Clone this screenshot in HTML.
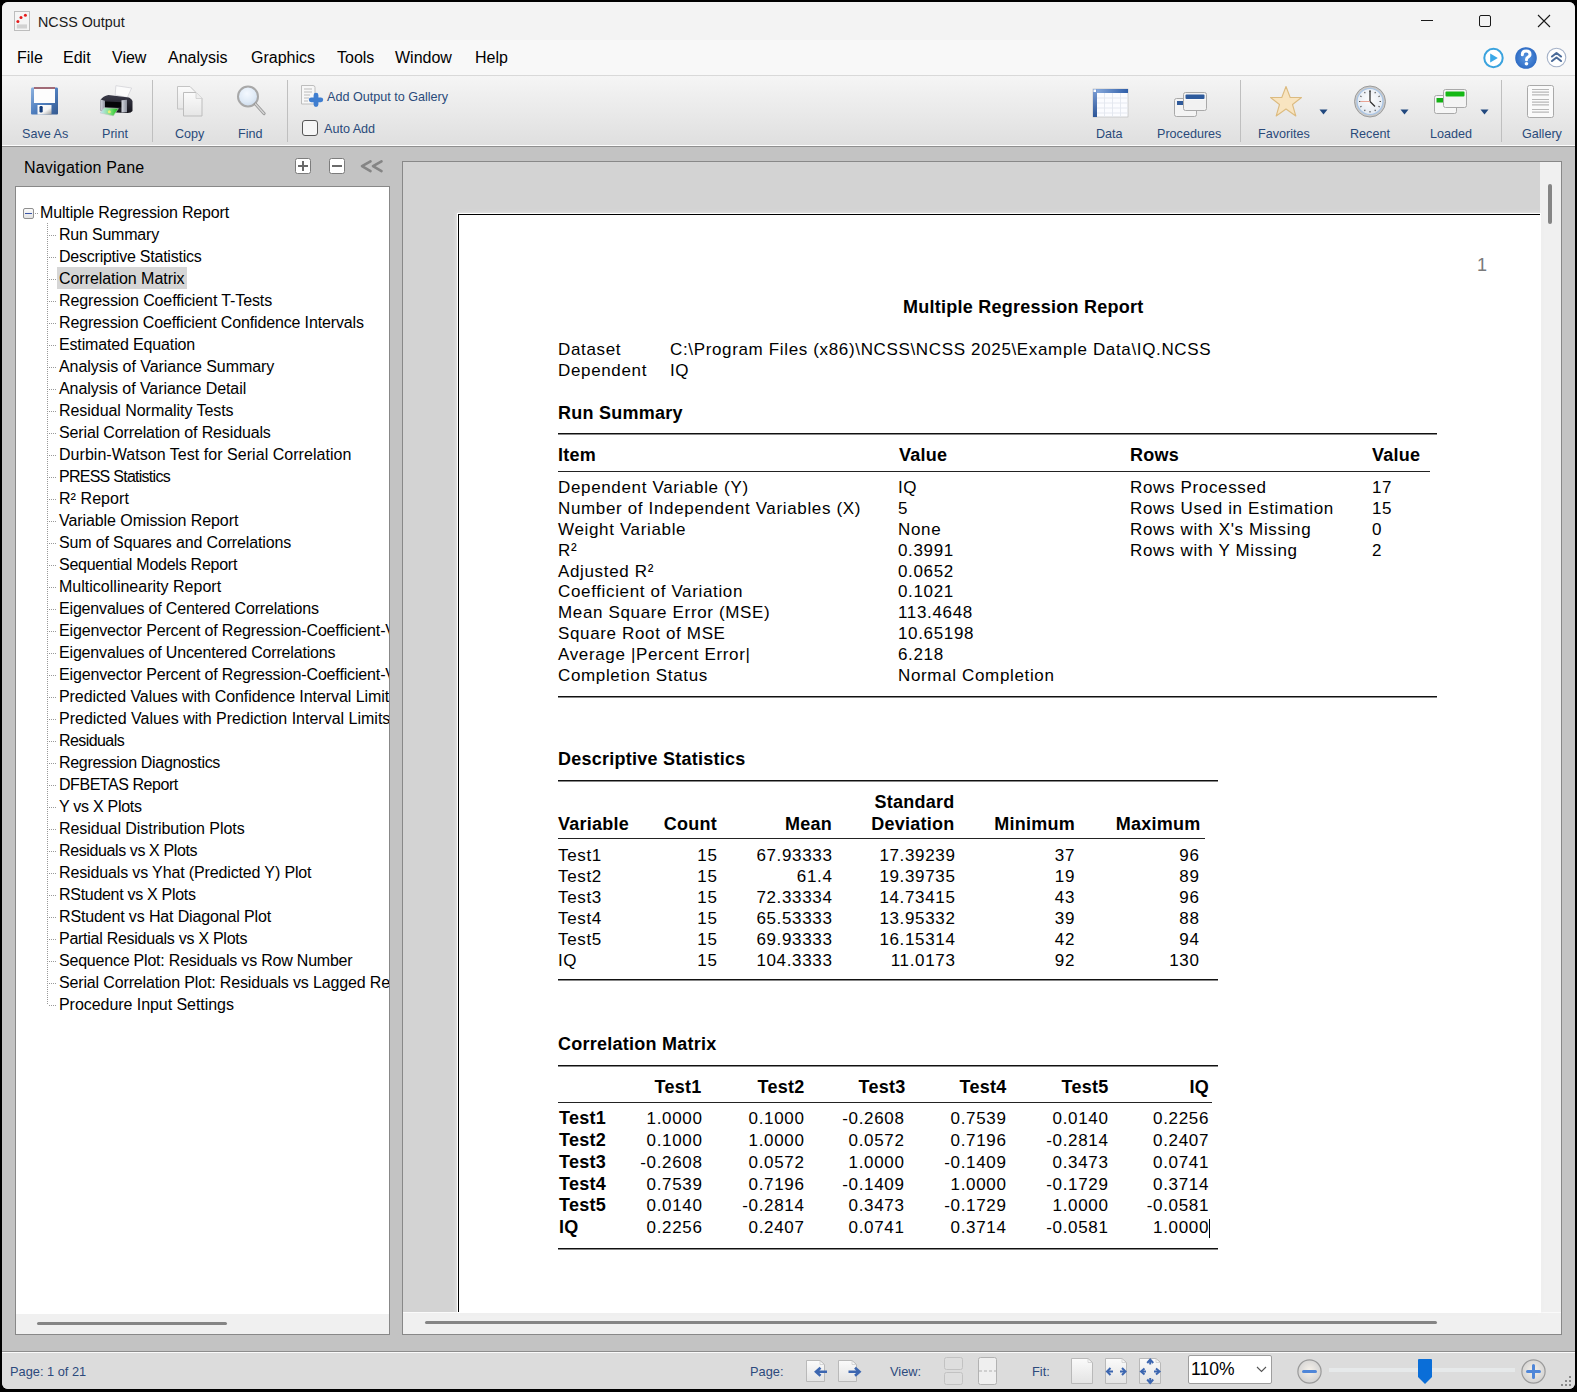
<!DOCTYPE html><html><head><meta charset="utf-8"><style>
*{margin:0;padding:0;box-sizing:border-box}
html,body{width:1577px;height:1392px;overflow:hidden;background:#000;font-family:"Liberation Sans",sans-serif;position:relative}
.a{position:absolute}
.t{position:absolute;white-space:pre;line-height:1}
.r17{font-size:17px;letter-spacing:0.65px;color:#000}
.b18{font-size:18px;font-weight:bold;letter-spacing:0.25px;color:#000}
.n16{font-size:16px;letter-spacing:-0.15px;color:#000}
.m16{font-size:16px;color:#000}
.tb{font-size:12.6px;color:#2a4a7a}
.rl{height:2px;background:linear-gradient(#000 0,#000 50%,#666 50%,#666 100%)}
</style></head><body>
<div class="a" style="left:2px;top:2px;width:1573px;height:1387px;background:#c3c3c3;border-radius:6px 6px 6px 6px;overflow:hidden"></div>
<div class="a" style="left:2px;top:2px;width:1573px;height:38px;background:#f3f3f3;border-radius:6px 6px 0 0"></div>
<div class="a" style="left:2px;top:40px;width:1573px;height:35px;background:#f8f8f8"></div>
<div class="a" style="left:2px;top:75px;width:1573px;height:1px;background:#d9d9d9"></div>
<div class="a" style="left:2px;top:76px;width:1573px;height:69px;background:linear-gradient(#f5f5f5,#dfdfdf)"></div>
<div class="a" style="left:2px;top:145px;width:1573px;height:1px;background:#fdfdfd"></div>
<div class="a" style="left:2px;top:146px;width:1573px;height:1px;background:#8f8f8f"></div>
<div class="a" style="left:2px;top:1351px;width:1573px;height:1px;background:#8d8d8d"></div>
<div class="a" style="left:2px;top:1352px;width:1573px;height:1px;background:#fbfbfb"></div>
<div class="a" style="left:2px;top:1353px;width:1573px;height:36px;background:#dcdcdc;border-radius:0 0 6px 6px"></div>
<div class="a" style="left:15px;top:186px;width:375px;height:1149px;background:#fff;border:1px solid #888"></div>
<div class="a" style="left:16px;top:1314px;width:373px;height:20px;background:#f0f0f0"></div>
<div class="a" style="left:37px;top:1322px;width:190px;height:3px;background:#858585;border-radius:2px"></div>
<div class="a" style="left:402px;top:161px;width:1160px;height:1174px;background:#d3d3d3;border:1px solid #888"></div>
<div class="a" style="left:1540px;top:162px;width:21px;height:1172px;background:#f0f0f0"></div>
<div class="a" style="left:403px;top:1312px;width:1158px;height:22px;background:#f0f0f0;border-top:1px solid #fafafa"></div>
<div class="a" style="left:1548px;top:184px;width:4px;height:40px;background:#858585;border-radius:2px"></div>
<div class="a" style="left:425px;top:1321px;width:1012px;height:3px;background:#858585;border-radius:2px"></div>
<div class="a" style="left:458px;top:214px;width:1082px;height:1098px;background:#fff;border-left:1px solid #000;border-top:1px solid #000;box-shadow:0 0 0 1px #fff,0 0 4px 1px #eee"></div>
<div class="t " style="left:1477px;top:256px;font-size:18px;color:#7a7a7a">1</div>
<div class="t b18" style="left:903px;top:298px;">Multiple Regression Report</div>
<div class="t r17" style="left:558px;top:341px;">Dataset</div>
<div class="t r17" style="left:670px;top:341px;">C:\Program Files (x86)\NCSS\NCSS 2025\Example Data\IQ.NCSS</div>
<div class="t r17" style="left:558px;top:362px;">Dependent</div>
<div class="t r17" style="left:670px;top:362px;">IQ</div>
<div class="t b18" style="left:558px;top:404px;">Run Summary</div>
<div class="a" style="left:558px;top:433px;width:879px;height:2px;background:linear-gradient(#111 0,#111 60%,#888 60%)"></div>
<div class="t b18" style="left:558px;top:446px;">Item</div>
<div class="t b18" style="left:899px;top:446px;">Value</div>
<div class="t b18" style="left:1130px;top:446px;">Rows</div>
<div class="t b18" style="left:1372px;top:446px;">Value</div>
<div class="a" style="left:558px;top:471px;width:872px;height:1px;background:#222"></div>
<div class="t r17" style="left:558px;top:479px;">Dependent Variable (Y)</div>
<div class="t r17" style="left:898px;top:479px;">IQ</div>
<div class="t r17" style="left:1130px;top:479px;">Rows Processed</div>
<div class="t r17" style="left:1372px;top:479px;">17</div>
<div class="t r17" style="left:558px;top:500px;">Number of Independent Variables (X)</div>
<div class="t r17" style="left:898px;top:500px;">5</div>
<div class="t r17" style="left:1130px;top:500px;">Rows Used in Estimation</div>
<div class="t r17" style="left:1372px;top:500px;">15</div>
<div class="t r17" style="left:558px;top:521px;">Weight Variable</div>
<div class="t r17" style="left:898px;top:521px;">None</div>
<div class="t r17" style="left:1130px;top:521px;">Rows with X&#x27;s Missing</div>
<div class="t r17" style="left:1372px;top:521px;">0</div>
<div class="t r17" style="left:558px;top:542px;">R²</div>
<div class="t r17" style="left:898px;top:542px;">0.3991</div>
<div class="t r17" style="left:1130px;top:542px;">Rows with Y Missing</div>
<div class="t r17" style="left:1372px;top:542px;">2</div>
<div class="t r17" style="left:558px;top:563px;">Adjusted R²</div>
<div class="t r17" style="left:898px;top:563px;">0.0652</div>
<div class="t r17" style="left:558px;top:583px;">Coefficient of Variation</div>
<div class="t r17" style="left:898px;top:583px;">0.1021</div>
<div class="t r17" style="left:558px;top:604px;">Mean Square Error (MSE)</div>
<div class="t r17" style="left:898px;top:604px;">113.4648</div>
<div class="t r17" style="left:558px;top:625px;">Square Root of MSE</div>
<div class="t r17" style="left:898px;top:625px;">10.65198</div>
<div class="t r17" style="left:558px;top:646px;">Average |Percent Error|</div>
<div class="t r17" style="left:898px;top:646px;">6.218</div>
<div class="t r17" style="left:558px;top:667px;">Completion Status</div>
<div class="t r17" style="left:898px;top:667px;">Normal Completion</div>
<div class="a" style="left:558px;top:696px;width:879px;height:2px;background:linear-gradient(#111 0,#111 60%,#888 60%)"></div>
<div class="t b18" style="left:558px;top:750px;">Descriptive Statistics</div>
<div class="a" style="left:558px;top:780px;width:660px;height:2px;background:linear-gradient(#111 0,#111 60%,#888 60%)"></div>
<div class="t b18" style="right:622.5px;top:793px;">Standard</div>
<div class="t b18" style="left:558px;top:815px;">Variable</div>
<div class="t b18" style="right:860px;top:815px;">Count</div>
<div class="t b18" style="right:745px;top:815px;">Mean</div>
<div class="t b18" style="right:622.5px;top:815px;">Deviation</div>
<div class="t b18" style="right:502px;top:815px;">Minimum</div>
<div class="t b18" style="right:376.5px;top:815px;">Maximum</div>
<div class="a" style="left:558px;top:838px;width:647px;height:1px;background:#222"></div>
<div class="t r17" style="left:558px;top:847px;">Test1</div>
<div class="t r17" style="right:859.5px;top:847px;">15</div>
<div class="t r17" style="right:744.5px;top:847px;">67.93333</div>
<div class="t r17" style="right:621.5px;top:847px;">17.39239</div>
<div class="t r17" style="right:502px;top:847px;">37</div>
<div class="t r17" style="right:377.5px;top:847px;">96</div>
<div class="t r17" style="left:558px;top:868px;">Test2</div>
<div class="t r17" style="right:859.5px;top:868px;">15</div>
<div class="t r17" style="right:744.5px;top:868px;">61.4</div>
<div class="t r17" style="right:621.5px;top:868px;">19.39735</div>
<div class="t r17" style="right:502px;top:868px;">19</div>
<div class="t r17" style="right:377.5px;top:868px;">89</div>
<div class="t r17" style="left:558px;top:889px;">Test3</div>
<div class="t r17" style="right:859.5px;top:889px;">15</div>
<div class="t r17" style="right:744.5px;top:889px;">72.33334</div>
<div class="t r17" style="right:621.5px;top:889px;">14.73415</div>
<div class="t r17" style="right:502px;top:889px;">43</div>
<div class="t r17" style="right:377.5px;top:889px;">96</div>
<div class="t r17" style="left:558px;top:910px;">Test4</div>
<div class="t r17" style="right:859.5px;top:910px;">15</div>
<div class="t r17" style="right:744.5px;top:910px;">65.53333</div>
<div class="t r17" style="right:621.5px;top:910px;">13.95332</div>
<div class="t r17" style="right:502px;top:910px;">39</div>
<div class="t r17" style="right:377.5px;top:910px;">88</div>
<div class="t r17" style="left:558px;top:931px;">Test5</div>
<div class="t r17" style="right:859.5px;top:931px;">15</div>
<div class="t r17" style="right:744.5px;top:931px;">69.93333</div>
<div class="t r17" style="right:621.5px;top:931px;">16.15314</div>
<div class="t r17" style="right:502px;top:931px;">42</div>
<div class="t r17" style="right:377.5px;top:931px;">94</div>
<div class="t r17" style="left:558px;top:952px;">IQ</div>
<div class="t r17" style="right:859.5px;top:952px;">15</div>
<div class="t r17" style="right:744.5px;top:952px;">104.3333</div>
<div class="t r17" style="right:621.5px;top:952px;">11.0173</div>
<div class="t r17" style="right:502px;top:952px;">92</div>
<div class="t r17" style="right:377.5px;top:952px;">130</div>
<div class="a" style="left:558px;top:979px;width:660px;height:2px;background:linear-gradient(#111 0,#111 60%,#888 60%)"></div>
<div class="t b18" style="left:558px;top:1035px;">Correlation Matrix</div>
<div class="a" style="left:558px;top:1065px;width:660px;height:2px;background:linear-gradient(#111 0,#111 60%,#888 60%)"></div>
<div class="t b18" style="right:875.5px;top:1078px;">Test1</div>
<div class="t b18" style="right:772.5px;top:1078px;">Test2</div>
<div class="t b18" style="right:671.5px;top:1078px;">Test3</div>
<div class="t b18" style="right:570.5px;top:1078px;">Test4</div>
<div class="t b18" style="right:468.5px;top:1078px;">Test5</div>
<div class="t b18" style="right:368px;top:1078px;">IQ</div>
<div class="a" style="left:558px;top:1102px;width:654px;height:1px;background:#222"></div>
<div class="t b18" style="left:559px;top:1109px;">Test1</div>
<div class="t r17" style="right:874.5px;top:1110px;">1.0000</div>
<div class="t r17" style="right:772.5px;top:1110px;">0.1000</div>
<div class="t r17" style="right:672.5px;top:1110px;">-0.2608</div>
<div class="t r17" style="right:570.5px;top:1110px;">0.7539</div>
<div class="t r17" style="right:468.5px;top:1110px;">0.0140</div>
<div class="t r17" style="right:368px;top:1110px;">0.2256</div>
<div class="t b18" style="left:559px;top:1131px;">Test2</div>
<div class="t r17" style="right:874.5px;top:1132px;">0.1000</div>
<div class="t r17" style="right:772.5px;top:1132px;">1.0000</div>
<div class="t r17" style="right:672.5px;top:1132px;">0.0572</div>
<div class="t r17" style="right:570.5px;top:1132px;">0.7196</div>
<div class="t r17" style="right:468.5px;top:1132px;">-0.2814</div>
<div class="t r17" style="right:368px;top:1132px;">0.2407</div>
<div class="t b18" style="left:559px;top:1153px;">Test3</div>
<div class="t r17" style="right:874.5px;top:1154px;">-0.2608</div>
<div class="t r17" style="right:772.5px;top:1154px;">0.0572</div>
<div class="t r17" style="right:672.5px;top:1154px;">1.0000</div>
<div class="t r17" style="right:570.5px;top:1154px;">-0.1409</div>
<div class="t r17" style="right:468.5px;top:1154px;">0.3473</div>
<div class="t r17" style="right:368px;top:1154px;">0.0741</div>
<div class="t b18" style="left:559px;top:1175px;">Test4</div>
<div class="t r17" style="right:874.5px;top:1176px;">0.7539</div>
<div class="t r17" style="right:772.5px;top:1176px;">0.7196</div>
<div class="t r17" style="right:672.5px;top:1176px;">-0.1409</div>
<div class="t r17" style="right:570.5px;top:1176px;">1.0000</div>
<div class="t r17" style="right:468.5px;top:1176px;">-0.1729</div>
<div class="t r17" style="right:368px;top:1176px;">0.3714</div>
<div class="t b18" style="left:559px;top:1196px;">Test5</div>
<div class="t r17" style="right:874.5px;top:1197px;">0.0140</div>
<div class="t r17" style="right:772.5px;top:1197px;">-0.2814</div>
<div class="t r17" style="right:672.5px;top:1197px;">0.3473</div>
<div class="t r17" style="right:570.5px;top:1197px;">-0.1729</div>
<div class="t r17" style="right:468.5px;top:1197px;">1.0000</div>
<div class="t r17" style="right:368px;top:1197px;">-0.0581</div>
<div class="t b18" style="left:559px;top:1218px;">IQ</div>
<div class="t r17" style="right:874.5px;top:1219px;">0.2256</div>
<div class="t r17" style="right:772.5px;top:1219px;">0.2407</div>
<div class="t r17" style="right:672.5px;top:1219px;">0.0741</div>
<div class="t r17" style="right:570.5px;top:1219px;">0.3714</div>
<div class="t r17" style="right:468.5px;top:1219px;">-0.0581</div>
<div class="t r17" style="right:368px;top:1219px;">1.0000</div>
<div class="a" style="left:1209px;top:1219px;width:1px;height:19px;background:#000"></div>
<div class="a" style="left:558px;top:1248px;width:660px;height:2px;background:linear-gradient(#111 0,#111 60%,#888 60%)"></div>
<div class="a" style="left:16px;top:187px;width:373px;height:1126px;overflow:hidden">
<div class="a" style="left:41px;top:80px;width:130px;height:22px;background:#d6d6d6"></div>
<div class="a" style="left:7px;top:21px;width:11px;height:11px;border:1px solid #8f8f8f;border-radius:2px;background:linear-gradient(#fafafa,#e4e4e4)"></div>
<div class="a" style="left:9px;top:26px;width:7px;height:1px;background:#3a55a8"></div>
<div class="a" style="left:19px;top:26px;width:4px;height:1px;background:repeating-linear-gradient(90deg,#999 0,#999 1px,transparent 1px,transparent 2px)"></div>
<div class="t n16" style="left:24px;top:18px;">Multiple Regression Report</div>
<div class="a" style="left:31px;top:36px;width:1px;height:781px;background:repeating-linear-gradient(#999 0,#999 1px,transparent 1px,transparent 2px)"></div>
<div class="a" style="left:32px;top:48px;width:8px;height:1px;background:repeating-linear-gradient(90deg,transparent 0,transparent 1px,#999 1px,#999 2px)"></div>
<div class="t n16" style="left:43px;top:40px;letter-spacing:-0.210px">Run Summary</div>
<div class="a" style="left:32px;top:70px;width:8px;height:1px;background:repeating-linear-gradient(90deg,transparent 0,transparent 1px,#999 1px,#999 2px)"></div>
<div class="t n16" style="left:43px;top:62px;letter-spacing:-0.231px">Descriptive Statistics</div>
<div class="a" style="left:32px;top:92px;width:8px;height:1px;background:repeating-linear-gradient(90deg,transparent 0,transparent 1px,#999 1px,#999 2px)"></div>
<div class="t n16" style="left:43px;top:84px;letter-spacing:-0.050px">Correlation Matrix</div>
<div class="a" style="left:32px;top:114px;width:8px;height:1px;background:repeating-linear-gradient(90deg,transparent 0,transparent 1px,#999 1px,#999 2px)"></div>
<div class="t n16" style="left:43px;top:106px;letter-spacing:-0.112px">Regression Coefficient T-Tests</div>
<div class="a" style="left:32px;top:136px;width:8px;height:1px;background:repeating-linear-gradient(90deg,transparent 0,transparent 1px,#999 1px,#999 2px)"></div>
<div class="t n16" style="left:43px;top:128px;letter-spacing:-0.145px">Regression Coefficient Confidence Intervals</div>
<div class="a" style="left:32px;top:158px;width:8px;height:1px;background:repeating-linear-gradient(90deg,transparent 0,transparent 1px,#999 1px,#999 2px)"></div>
<div class="t n16" style="left:43px;top:150px;letter-spacing:-0.150px">Estimated Equation</div>
<div class="a" style="left:32px;top:180px;width:8px;height:1px;background:repeating-linear-gradient(90deg,transparent 0,transparent 1px,#999 1px,#999 2px)"></div>
<div class="t n16" style="left:43px;top:172px;letter-spacing:-0.050px">Analysis of Variance Summary</div>
<div class="a" style="left:32px;top:202px;width:8px;height:1px;background:repeating-linear-gradient(90deg,transparent 0,transparent 1px,#999 1px,#999 2px)"></div>
<div class="t n16" style="left:43px;top:194px;letter-spacing:-0.073px">Analysis of Variance Detail</div>
<div class="a" style="left:32px;top:224px;width:8px;height:1px;background:repeating-linear-gradient(90deg,transparent 0,transparent 1px,#999 1px,#999 2px)"></div>
<div class="t n16" style="left:43px;top:216px;letter-spacing:-0.050px">Residual Normality Tests</div>
<div class="a" style="left:32px;top:246px;width:8px;height:1px;background:repeating-linear-gradient(90deg,transparent 0,transparent 1px,#999 1px,#999 2px)"></div>
<div class="t n16" style="left:43px;top:238px;letter-spacing:-0.143px">Serial Correlation of Residuals</div>
<div class="a" style="left:32px;top:268px;width:8px;height:1px;background:repeating-linear-gradient(90deg,transparent 0,transparent 1px,#999 1px,#999 2px)"></div>
<div class="t n16" style="left:43px;top:260px;letter-spacing:0.040px">Durbin-Watson Test for Serial Correlation</div>
<div class="a" style="left:32px;top:290px;width:8px;height:1px;background:repeating-linear-gradient(90deg,transparent 0,transparent 1px,#999 1px,#999 2px)"></div>
<div class="t n16" style="left:43px;top:282px;letter-spacing:-0.737px">PRESS Statistics</div>
<div class="a" style="left:32px;top:312px;width:8px;height:1px;background:repeating-linear-gradient(90deg,transparent 0,transparent 1px,#999 1px,#999 2px)"></div>
<div class="t n16" style="left:43px;top:304px;letter-spacing:0.062px">R² Report</div>
<div class="a" style="left:32px;top:334px;width:8px;height:1px;background:repeating-linear-gradient(90deg,transparent 0,transparent 1px,#999 1px,#999 2px)"></div>
<div class="t n16" style="left:43px;top:326px;letter-spacing:-0.076px">Variable Omission Report</div>
<div class="a" style="left:32px;top:356px;width:8px;height:1px;background:repeating-linear-gradient(90deg,transparent 0,transparent 1px,#999 1px,#999 2px)"></div>
<div class="t n16" style="left:43px;top:348px;letter-spacing:-0.147px">Sum of Squares and Correlations</div>
<div class="a" style="left:32px;top:378px;width:8px;height:1px;background:repeating-linear-gradient(90deg,transparent 0,transparent 1px,#999 1px,#999 2px)"></div>
<div class="t n16" style="left:43px;top:370px;letter-spacing:-0.250px">Sequential Models Report</div>
<div class="a" style="left:32px;top:400px;width:8px;height:1px;background:repeating-linear-gradient(90deg,transparent 0,transparent 1px,#999 1px,#999 2px)"></div>
<div class="t n16" style="left:43px;top:392px;letter-spacing:0.011px">Multicollinearity Report</div>
<div class="a" style="left:32px;top:422px;width:8px;height:1px;background:repeating-linear-gradient(90deg,transparent 0,transparent 1px,#999 1px,#999 2px)"></div>
<div class="t n16" style="left:43px;top:414px;letter-spacing:-0.173px">Eigenvalues of Centered Correlations</div>
<div class="a" style="left:32px;top:444px;width:8px;height:1px;background:repeating-linear-gradient(90deg,transparent 0,transparent 1px,#999 1px,#999 2px)"></div>
<div class="t n16" style="left:43px;top:436px;letter-spacing:-0.150px">Eigenvector Percent of Regression-Coefficient-Variances</div>
<div class="a" style="left:32px;top:466px;width:8px;height:1px;background:repeating-linear-gradient(90deg,transparent 0,transparent 1px,#999 1px,#999 2px)"></div>
<div class="t n16" style="left:43px;top:458px;letter-spacing:-0.169px">Eigenvalues of Uncentered Correlations</div>
<div class="a" style="left:32px;top:488px;width:8px;height:1px;background:repeating-linear-gradient(90deg,transparent 0,transparent 1px,#999 1px,#999 2px)"></div>
<div class="t n16" style="left:43px;top:480px;letter-spacing:-0.150px">Eigenvector Percent of Regression-Coefficient-Variances</div>
<div class="a" style="left:32px;top:510px;width:8px;height:1px;background:repeating-linear-gradient(90deg,transparent 0,transparent 1px,#999 1px,#999 2px)"></div>
<div class="t n16" style="left:43px;top:502px;letter-spacing:-0.065px">Predicted Values with Confidence Interval Limits</div>
<div class="a" style="left:32px;top:532px;width:8px;height:1px;background:repeating-linear-gradient(90deg,transparent 0,transparent 1px,#999 1px,#999 2px)"></div>
<div class="t n16" style="left:43px;top:524px;letter-spacing:-0.001px">Predicted Values with Prediction Interval Limits</div>
<div class="a" style="left:32px;top:554px;width:8px;height:1px;background:repeating-linear-gradient(90deg,transparent 0,transparent 1px,#999 1px,#999 2px)"></div>
<div class="t n16" style="left:43px;top:546px;letter-spacing:-0.575px">Residuals</div>
<div class="a" style="left:32px;top:576px;width:8px;height:1px;background:repeating-linear-gradient(90deg,transparent 0,transparent 1px,#999 1px,#999 2px)"></div>
<div class="t n16" style="left:43px;top:568px;letter-spacing:-0.321px">Regression Diagnostics</div>
<div class="a" style="left:32px;top:598px;width:8px;height:1px;background:repeating-linear-gradient(90deg,transparent 0,transparent 1px,#999 1px,#999 2px)"></div>
<div class="t n16" style="left:43px;top:590px;letter-spacing:-0.450px">DFBETAS Report</div>
<div class="a" style="left:32px;top:620px;width:8px;height:1px;background:repeating-linear-gradient(90deg,transparent 0,transparent 1px,#999 1px,#999 2px)"></div>
<div class="t n16" style="left:43px;top:612px;letter-spacing:-0.268px">Y vs X Plots</div>
<div class="a" style="left:32px;top:642px;width:8px;height:1px;background:repeating-linear-gradient(90deg,transparent 0,transparent 1px,#999 1px,#999 2px)"></div>
<div class="t n16" style="left:43px;top:634px;letter-spacing:-0.042px">Residual Distribution Plots</div>
<div class="a" style="left:32px;top:664px;width:8px;height:1px;background:repeating-linear-gradient(90deg,transparent 0,transparent 1px,#999 1px,#999 2px)"></div>
<div class="t n16" style="left:43px;top:656px;letter-spacing:-0.387px">Residuals vs X Plots</div>
<div class="a" style="left:32px;top:686px;width:8px;height:1px;background:repeating-linear-gradient(90deg,transparent 0,transparent 1px,#999 1px,#999 2px)"></div>
<div class="t n16" style="left:43px;top:678px;letter-spacing:-0.136px">Residuals vs Yhat (Predicted Y) Plot</div>
<div class="a" style="left:32px;top:708px;width:8px;height:1px;background:repeating-linear-gradient(90deg,transparent 0,transparent 1px,#999 1px,#999 2px)"></div>
<div class="t n16" style="left:43px;top:700px;letter-spacing:-0.294px">RStudent vs X Plots</div>
<div class="a" style="left:32px;top:730px;width:8px;height:1px;background:repeating-linear-gradient(90deg,transparent 0,transparent 1px,#999 1px,#999 2px)"></div>
<div class="t n16" style="left:43px;top:722px;letter-spacing:-0.143px">RStudent vs Hat Diagonal Plot</div>
<div class="a" style="left:32px;top:752px;width:8px;height:1px;background:repeating-linear-gradient(90deg,transparent 0,transparent 1px,#999 1px,#999 2px)"></div>
<div class="t n16" style="left:43px;top:744px;letter-spacing:-0.265px">Partial Residuals vs X Plots</div>
<div class="a" style="left:32px;top:774px;width:8px;height:1px;background:repeating-linear-gradient(90deg,transparent 0,transparent 1px,#999 1px,#999 2px)"></div>
<div class="t n16" style="left:43px;top:766px;letter-spacing:-0.212px">Sequence Plot: Residuals vs Row Number</div>
<div class="a" style="left:32px;top:796px;width:8px;height:1px;background:repeating-linear-gradient(90deg,transparent 0,transparent 1px,#999 1px,#999 2px)"></div>
<div class="t n16" style="left:43px;top:788px;letter-spacing:-0.150px">Serial Correlation Plot: Residuals vs Lagged Residuals</div>
<div class="a" style="left:32px;top:818px;width:8px;height:1px;background:repeating-linear-gradient(90deg,transparent 0,transparent 1px,#999 1px,#999 2px)"></div>
<div class="t n16" style="left:43px;top:810px;letter-spacing:-0.050px">Procedure Input Settings</div>
</div>
<div class="t " style="left:24px;top:160px;font-size:16px;letter-spacing:0.2px;color:#000">Navigation Pane</div>
<div class="a" style="left:295px;top:158px;width:16px;height:16px;border:1.5px solid #7c7c7c;border-radius:2.5px;background:#fff"></div>
<div class="a" style="left:298px;top:165px;width:10px;height:2px;background:#6a6a6a"></div>
<div class="a" style="left:302px;top:161px;width:2px;height:10px;background:#6a6a6a"></div>
<div class="a" style="left:329px;top:158px;width:16px;height:16px;border:1.5px solid #7c7c7c;border-radius:2.5px;background:#fff"></div>
<div class="a" style="left:332px;top:165px;width:10px;height:2px;background:#6a6a6a"></div>
<svg class="a" style="left:359px;top:159px" width="26" height="15"><path d="M11.5 2.3 L3 7.2 L11.5 12.2 M22.5 2.3 L14 7.2 L22.5 12.2" fill="none" stroke="#858585" stroke-width="2.6" stroke-linecap="round" stroke-linejoin="round"/></svg>
<svg class="a" style="left:14px;top:11px" width="17" height="20"><rect x="0.5" y="0.5" width="15" height="19" fill="#f5f5f5" stroke="#bdbdbd"/><rect x="2.8" y="13.4" width="10.2" height="4.1" fill="#d2d2d2"/><circle cx="3.9" cy="10.6" r="1.5" fill="#e41c1c"/><circle cx="7" cy="6.5" r="1.5" fill="#e41c1c"/><circle cx="11.4" cy="4.3" r="1.5" fill="#e41c1c"/></svg>
<div class="t " style="left:38px;top:15px;font-size:14.3px;color:#1a1a1a">NCSS Output</div>
<div class="t m16" style="left:17px;top:50px;">File</div>
<div class="t m16" style="left:63px;top:50px;">Edit</div>
<div class="t m16" style="left:112px;top:50px;">View</div>
<div class="t m16" style="left:168px;top:50px;">Analysis</div>
<div class="t m16" style="left:251px;top:50px;">Graphics</div>
<div class="t m16" style="left:337px;top:50px;">Tools</div>
<div class="t m16" style="left:395px;top:50px;">Window</div>
<div class="t m16" style="left:475px;top:50px;">Help</div>
<div class="a" style="left:1421px;top:20px;width:12px;height:1px;background:#1a1a1a"></div>
<div class="a" style="left:1479px;top:15px;width:12px;height:12px;border:1px solid #1a1a1a;border-radius:2px"></div>
<svg class="a" style="left:1537px;top:14px" width="14" height="14"><path d="M1 1L13 13M13 1L1 13" stroke="#1a1a1a" stroke-width="1.1"/></svg>
<div class="a" style="left:152px;top:80px;width:1px;height:62px;background:#bfbfbf"></div>
<div class="a" style="left:287px;top:80px;width:1px;height:62px;background:#bfbfbf"></div>
<div class="a" style="left:1240px;top:80px;width:1px;height:62px;background:#bfbfbf"></div>
<div class="a" style="left:1501px;top:80px;width:1px;height:62px;background:#bfbfbf"></div>
<div class="t tb" style="left:22px;top:128px;">Save As</div>
<div class="t tb" style="left:102px;top:128px;">Print</div>
<div class="t tb" style="left:175px;top:128px;">Copy</div>
<div class="t tb" style="left:238px;top:128px;">Find</div>
<div class="t tb" style="left:1096px;top:128px;">Data</div>
<div class="t tb" style="left:1157px;top:128px;">Procedures</div>
<div class="t tb" style="left:1258px;top:128px;">Favorites</div>
<div class="t tb" style="left:1350px;top:128px;">Recent</div>
<div class="t tb" style="left:1430px;top:128px;">Loaded</div>
<div class="t tb" style="left:1522px;top:128px;">Gallery</div>
<div class="t tb" style="left:327px;top:91px;">Add Output to Gallery</div>
<div class="t tb" style="left:324px;top:123px;">Auto Add</div>
<div class="a" style="left:302px;top:120px;width:16px;height:16px;border:1px solid #555;border-radius:3px;background:#f6f6f6"></div>
<svg class="a" style="left:30px;top:86px" width="29" height="30" viewBox="0 0 29 30"><defs><linearGradient id="fb" x1="0" y1="0" x2="1" y2="1"><stop offset="0" stop-color="#8fb3e0"/><stop offset="0.5" stop-color="#4f7fbf"/><stop offset="1" stop-color="#34598f"/></linearGradient><linearGradient id="fs" x1="0" y1="0" x2="1" y2="1"><stop offset="0" stop-color="#fff"/><stop offset="0.6" stop-color="#f4f4f4"/><stop offset="1" stop-color="#9a9a9a"/></linearGradient></defs><path d="M2 1.5 H27 Q28 1.5 28 3 V27.5 Q28 28.5 27 28.5 H2 Q1 28.5 1 27.5 V3 Q1 1.5 2 1.5Z" fill="url(#fb)"/><rect x="4" y="1" width="21" height="2" fill="#a06a76"/><rect x="4" y="3" width="21" height="14" fill="#fdfdfd"/><rect x="7.5" y="19" width="14" height="9.5" fill="url(#fs)"/><rect x="9.5" y="20" width="3.2" height="6.5" rx="1.2" fill="#123a78"/></svg>
<svg class="a" style="left:98px;top:84px" width="37" height="33" viewBox="0 0 37 33"><defs><linearGradient id="pg" x1="0" y1="0" x2="1" y2="0"><stop offset="0" stop-color="#c4e4ff"/><stop offset="0.55" stop-color="#7fe07f"/><stop offset="1" stop-color="#10c010"/></linearGradient><linearGradient id="ps" x1="0" y1="0" x2="1" y2="0"><stop offset="0" stop-color="#d7dae2"/><stop offset="1" stop-color="#8c909c"/></linearGradient><linearGradient id="pk" x1="0" y1="0" x2="0" y2="1"><stop offset="0" stop-color="#3a3a48"/><stop offset="1" stop-color="#15151c"/></linearGradient></defs><path d="M17.9 1.7 L33.6 4 L29.3 13.5 L17.2 11Z" fill="#fbfbfb" stroke="#cfcfd4" stroke-width="0.7"/><path d="M2.4 16 Q5 12 10.4 11 L31 13.5 Q34 15 34.5 17 L34.5 27 Q33 29.5 28 29 L8 28 L2.4 26.6Z" fill="url(#pk)"/><path d="M2.4 15.5 L7 16.8 L7 27.5 L2.4 26.6Z" fill="url(#ps)"/><path d="M7 17.4 L24 18.2 L24 23.5 L7 23Z" fill="#050508"/><path d="M23.5 16.3 L29 15.8 L29 28.3 L23.5 28.6Z" fill="url(#ps)"/><path d="M2 28.9 L6.4 23.7 L20.4 24.6 L15.3 31.9Z" fill="url(#pg)" stroke="#c8c8c8" stroke-width="0.6"/><circle cx="11.3" cy="27.7" r="1.5" fill="#e8ee78"/></svg>
<svg class="a" style="left:176px;top:85px" width="28" height="33" viewBox="0 0 28 33"><defs><linearGradient id="cg" x1="0" y1="0" x2="0" y2="1"><stop offset="0" stop-color="#fbfbfb"/><stop offset="1" stop-color="#e6e6e6"/></linearGradient></defs><path d="M1.5 1.5 H14 L19 6.5 V24 H1.5Z" fill="url(#cg)" stroke="#c4c4c4"/><path d="M7.5 7.5 H20 L26 13.5 V31 H7.5Z" fill="url(#cg)" stroke="#bdbdbd"/><path d="M20 7.5 V13.5 H26" fill="#eee" stroke="#c8c8c8" stroke-width="0.7"/></svg>
<svg class="a" style="left:236px;top:84px" width="31" height="35" viewBox="0 0 31 35"><defs><radialGradient id="lg" cx="0.45" cy="0.35" r="0.7"><stop offset="0" stop-color="#f4f9ff"/><stop offset="0.6" stop-color="#dfeaf6"/><stop offset="1" stop-color="#c7d6e8"/></radialGradient></defs><circle cx="12" cy="12.5" r="10" fill="url(#lg)" stroke="#a8a8a8" stroke-width="2"/><path d="M19.5 20 L28 29.5" stroke="#9a9a9a" stroke-width="3.2" stroke-linecap="round"/><path d="M19.5 20 L28 29.5" stroke="#d8d8d8" stroke-width="1.2" stroke-linecap="round"/></svg>
<svg class="a" style="left:300px;top:84px" width="25" height="25" viewBox="0 0 25 25"><path d="M1.5 1.5 H13 Q15 1.5 15 3.5 V20 H1.5Z" fill="#f7f7f7" stroke="#bdbdbd"/><path d="M4 5 H12 M4 8 H12 M4 11 H10 M4 14 H9 M4 17 H8" stroke="#bcbcbc" stroke-width="1.1"/><path d="M16 11.2 V20.6 M11.2 15.8 H20.8" stroke="#3f7ed0" stroke-width="4.8" stroke-linecap="round"/></svg>
<svg class="a" style="left:1092px;top:88px" width="38" height="31" viewBox="0 0 38 31"><defs><linearGradient id="dg" x1="0" y1="0" x2="1" y2="0"><stop offset="0" stop-color="#8fb0e0"/><stop offset="1" stop-color="#2f5ea8"/></linearGradient><linearGradient id="dl" x1="0" y1="0" x2="0" y2="1"><stop offset="0" stop-color="#7d9fd6"/><stop offset="1" stop-color="#2c5597"/></linearGradient></defs><rect x="1" y="1" width="35" height="28" fill="#fbfcff" stroke="#b5b5b5" stroke-width="0.6"/><rect x="1" y="1" width="35" height="4" fill="url(#dg)"/><rect x="1" y="1" width="4" height="28" fill="url(#dl)"/><rect x="1.5" y="1.5" width="2.5" height="2.5" fill="#fff"/><path d="M12.5 5 V29 M20.5 5 V29 M28.5 5 V29 M5 10 H36 M5 15 H36 M5 20 H36 M5 25 H36" stroke="#e2e6ee" stroke-width="0.9"/></svg>
<svg class="a" style="left:1173px;top:91px" width="36" height="27" viewBox="0 0 36 27"><rect x="1.5" y="7.5" width="22" height="18" rx="2" fill="#f4f4f4" stroke="#a9a9a9"/><rect x="4" y="10" width="7" height="4" fill="#2f5a9a"/><rect x="10.5" y="1.5" width="23" height="18" rx="2" fill="#f2f2f2" stroke="#a9a9a9"/><rect x="12.5" y="3.5" width="19" height="4.5" rx="1" fill="#2d5a9c"/><rect x="11" y="8" width="22" height="0.8" fill="#fafafa"/></svg>
<svg class="a" style="left:1269px;top:85px" width="34" height="33" viewBox="0 0 34 33"><path d="M17 1.5 L21.2 12.5 L32.5 12.5 L23.5 19.5 L26.8 31 L17 24 L7.2 31 L10.5 19.5 L1.5 12.5 L12.8 12.5Z" fill="#f8e4c0" stroke="#dcbb80" stroke-width="1.1" stroke-linejoin="round"/></svg>
<svg class="a" style="left:1353px;top:85px" width="35" height="34" viewBox="0 0 35 34"><defs><radialGradient id="kg" cx="0.5" cy="0.4" r="0.6"><stop offset="0" stop-color="#fdfdfd"/><stop offset="1" stop-color="#e2e8f0"/></radialGradient></defs><circle cx="17" cy="16.5" r="15.5" fill="#c9c9c9" stroke="#9c9c9c" stroke-width="1"/><circle cx="17" cy="16.5" r="13" fill="url(#kg)" stroke="#a7c4e6" stroke-width="1.2"/><g stroke="#555" stroke-width="1.1"><path d="M17 5.5V7M17 26V27.5M6 16.5H7.5M26.5 16.5H28M11.5 7L12.2 8.2M22.5 7L21.8 8.2M7.3 11L8.5 11.7M26.7 11L25.5 11.7M7.3 22L8.5 21.3M26.7 22L25.5 21.3M11.5 26L12.2 24.8M22.5 26L21.8 24.8"/></g><path d="M17 16.5 V5.5 M17 16.5 L22 21.5" stroke="#333" stroke-width="1.3"/><path d="M17 16.5 H7.5" stroke="#e79a8a" stroke-width="0.9"/></svg>
<svg class="a" style="left:1433px;top:88px" width="36" height="27" viewBox="0 0 36 27"><rect x="1.5" y="7.5" width="22" height="18" rx="2" fill="#f6f6f6" stroke="#a9a9a9"/><rect x="3.5" y="10" width="7" height="4.5" fill="#14b014"/><rect x="10.5" y="1.5" width="23" height="18" rx="2" fill="#f4f4f4" stroke="#a9a9a9"/><rect x="12.5" y="3.5" width="19" height="5" rx="1" fill="#14b814"/></svg>
<svg class="a" style="left:1526px;top:84px" width="29" height="35" viewBox="0 0 29 35"><rect x="1.5" y="1.5" width="26" height="32" rx="2" fill="#fafafa" stroke="#a9a9a9"/><path d="M6 5.5H23M6 8.2H23M6 10.8H23M6 15.5H23M6 18.2H23M6 20.8H23M6 25.5H23M6 28.2H23" stroke="#b8b8b8" stroke-width="1.2"/></svg>
<svg class="a" style="left:1319px;top:109px" width="9" height="6" viewBox="0 0 9 6"><path d="M0.5 0.5 H8.5 L4.5 5.5Z" fill="#21487e"/></svg>
<svg class="a" style="left:1400px;top:109px" width="9" height="6" viewBox="0 0 9 6"><path d="M0.5 0.5 H8.5 L4.5 5.5Z" fill="#21487e"/></svg>
<svg class="a" style="left:1480px;top:109px" width="9" height="6" viewBox="0 0 9 6"><path d="M0.5 0.5 H8.5 L4.5 5.5Z" fill="#21487e"/></svg>
<svg class="a" style="left:1482px;top:47px" width="23" height="23" viewBox="0 0 23 23"><circle cx="11.5" cy="11" r="9.2" fill="#fff" stroke="#3ba3de" stroke-width="2"/><path d="M8.2 6.5 L15.8 11 L8.2 15.5Z" fill="#3aa8e8"/></svg>
<svg class="a" style="left:1514px;top:46px" width="24" height="24" viewBox="0 0 24 24"><defs><radialGradient id="hg" cx="0.5" cy="0.5" r="0.5"><stop offset="0" stop-color="#5b98e2"/><stop offset="1" stop-color="#2f6cc4"/></radialGradient></defs><circle cx="12" cy="12" r="10.8" fill="url(#hg)"/><path d="M8.3 8.8 Q8.3 5 12.2 5 Q16 5 16 8.3 Q16 10.3 13.7 11.4 Q12.5 12 12.5 13.8" fill="none" stroke="#fff" stroke-width="3" stroke-linecap="round"/><circle cx="12.5" cy="17.8" r="1.8" fill="#fff"/></svg>
<svg class="a" style="left:1546px;top:47px" width="22" height="22" viewBox="0 0 22 22"><circle cx="10.5" cy="10.5" r="9.3" fill="#fff" stroke="#a5b2c8" stroke-width="1.1"/><path d="M6 9.5 L10.5 6 L15 9.5 M6 14 L10.5 10.5 L15 14" fill="none" stroke="#4a6a98" stroke-width="2.1" stroke-linecap="round" stroke-linejoin="round"/></svg>
<div class="t " style="left:750px;top:1366px;font-size:12.8px;color:#2c4a7c;left:10px">Page: 1 of 21</div>
<div class="t " style="left:750px;top:1366px;font-size:12.8px;color:#2c4a7c">Page:</div>
<div class="t " style="left:890px;top:1366px;font-size:12.8px;color:#2c4a7c">View:</div>
<div class="t " style="left:1032px;top:1366px;font-size:12.8px;color:#2c4a7c">Fit:</div>
<svg class="a" style="left:805px;top:1359px" width="25" height="24" viewBox="0 0 25 24"><defs><linearGradient id="dcg" x1="0" y1="0" x2="0" y2="1"><stop offset="0" stop-color="#fbfbfb"/><stop offset="1" stop-color="#e3e3e3"/></linearGradient></defs><path d="M1.5 1.5 H15 L19.5 5.5 V22.5 H1.5Z" fill="url(#dcg)" stroke="#b9b9b9"/><path d="M15 1.5 V5.5 H19.5" fill="none" stroke="#c9c9c9" stroke-width="0.7"/><path d="M12 12.8 H22 M15.5 8.8 L11 12.8 L15.5 16.8" fill="none" stroke="#3c66b0" stroke-width="2.6" stroke-linejoin="miter"/></svg>
<svg class="a" style="left:837px;top:1359px" width="25" height="24" viewBox="0 0 25 24"><defs><linearGradient id="dcg" x1="0" y1="0" x2="0" y2="1"><stop offset="0" stop-color="#fbfbfb"/><stop offset="1" stop-color="#e3e3e3"/></linearGradient></defs><path d="M1.5 1.5 H15 L19.5 5.5 V22.5 H1.5Z" fill="url(#dcg)" stroke="#b9b9b9"/><path d="M15 1.5 V5.5 H19.5" fill="none" stroke="#c9c9c9" stroke-width="0.7"/><path d="M11.5 12.8 H21.5 M18 8.8 L22.5 12.8 L18 16.8" fill="none" stroke="#3c66b0" stroke-width="2.6"/></svg>
<svg class="a" style="left:943px;top:1356px" width="21" height="30" viewBox="0 0 21 30"><rect x="1.5" y="1.5" width="18" height="12" rx="2" fill="#dedede" stroke="#c2c2c2"/><rect x="1.5" y="16.5" width="18" height="12" rx="2" fill="#dedede" stroke="#c2c2c2"/></svg>
<svg class="a" style="left:977px;top:1356px" width="21" height="30" viewBox="0 0 21 30"><rect x="1.5" y="1.5" width="18" height="27" rx="2" fill="#efefef" stroke="#b2b2b2"/><path d="M2 15 H19" stroke="#b0b0b0" stroke-width="1.2" stroke-dasharray="3 2"/></svg>
<svg class="a" style="left:1070px;top:1357px" width="24" height="28" viewBox="0 0 24 28"><defs><linearGradient id="dcg" x1="0" y1="0" x2="0" y2="1"><stop offset="0" stop-color="#fbfbfb"/><stop offset="1" stop-color="#e3e3e3"/></linearGradient></defs><path d="M1.5 1.5 H18 L22.5 5.5 V26.5 H1.5Z" fill="url(#dcg)" stroke="#b9b9b9"/><path d="M18 1.5 V5.5 H22.5" fill="none" stroke="#c9c9c9" stroke-width="0.7"/></svg>
<svg class="a" style="left:1104px;top:1357px" width="24" height="28" viewBox="0 0 24 28"><defs><linearGradient id="dcg" x1="0" y1="0" x2="0" y2="1"><stop offset="0" stop-color="#fbfbfb"/><stop offset="1" stop-color="#e3e3e3"/></linearGradient></defs><path d="M1.5 1.5 H18 L22.5 5.5 V26.5 H1.5Z" fill="url(#dcg)" stroke="#b9b9b9"/><path d="M18 1.5 V5.5 H22.5" fill="none" stroke="#c9c9c9" stroke-width="0.7"/><path d="M3.5 14.5 H9 M16 14.5 H21" stroke="#3c66b0" stroke-width="2"/><path d="M6.5 11 L3 14.5 L6.5 18 M18 11 L21.5 14.5 L18 18" fill="none" stroke="#3c66b0" stroke-width="2"/></svg>
<svg class="a" style="left:1138px;top:1357px" width="24" height="28" viewBox="0 0 24 28"><defs><linearGradient id="dcg" x1="0" y1="0" x2="0" y2="1"><stop offset="0" stop-color="#fbfbfb"/><stop offset="1" stop-color="#e3e3e3"/></linearGradient></defs><path d="M1.5 1.5 H18 L22.5 5.5 V26.5 H1.5Z" fill="url(#dcg)" stroke="#b9b9b9"/><path d="M18 1.5 V5.5 H22.5" fill="none" stroke="#c9c9c9" stroke-width="0.7"/><path d="M3.5 14.5 H8 M16 14.5 H21 M12.2 3 V7.5 M12.2 21 V25.5" stroke="#3c66b0" stroke-width="2"/><path d="M6.5 11.5 L3 14.5 L6.5 17.5 M18 11.5 L21.5 14.5 L18 17.5 M9.2 6 L12.2 2.5 L15.2 6 M9.2 22.5 L12.2 26 L15.2 22.5" fill="none" stroke="#3c66b0" stroke-width="2"/></svg>
<div class="a" style="left:1188px;top:1355px;width:84px;height:29px;background:#fff;border:1px solid #9e9e9e;border-radius:2px"></div>
<div class="t " style="left:1191px;top:1361px;font-size:17.5px;color:#000;font-family:"Liberation Serif",serif">110%</div>
<svg class="a" style="left:1256px;top:1366px" width="11" height="7" viewBox="0 0 11 7"><path d="M1 1 L5.5 5.5 L10 1" fill="none" stroke="#555" stroke-width="1.1"/></svg>
<svg class="a" style="left:1296px;top:1358px" width="27" height="27" viewBox="0 0 27 27"><defs><radialGradient id="zg" cx="0.5" cy="0.45" r="0.55"><stop offset="0" stop-color="#f6f1ea"/><stop offset="1" stop-color="#d2d2d2"/></radialGradient></defs><circle cx="13.5" cy="13.5" r="11.6" fill="url(#zg)" stroke="#9a9a9a" stroke-width="1.2"/><path d="M7.5 13.5 H19.5" stroke="#4f86d8" stroke-width="3" stroke-linecap="round"/></svg>
<div class="a" style="left:1329px;top:1368px;width:186px;height:4px;background:#e6e9ea"></div>
<svg class="a" style="left:1417px;top:1358px" width="16" height="27" viewBox="0 0 16 27"><path d="M1 2 Q1 1 2 1 H14 Q15 1 15 2 V19 L8 26 L1 19Z" fill="#0a6ed8"/></svg>
<svg class="a" style="left:1520px;top:1358px" width="27" height="27" viewBox="0 0 27 27"><defs><radialGradient id="zg2" cx="0.5" cy="0.45" r="0.55"><stop offset="0" stop-color="#f6f1ea"/><stop offset="1" stop-color="#d2d2d2"/></radialGradient></defs><circle cx="13.5" cy="13.5" r="11.6" fill="url(#zg2)" stroke="#9a9a9a" stroke-width="1.2"/><path d="M7.5 13.5 H19.5 M13.5 7.5 V19.5" stroke="#4f86d8" stroke-width="3" stroke-linecap="round"/></svg>
<div class="a" style="left:1569px;top:1376px;width:2px;height:2px;background:#8a8a8a"></div>
<div class="a" style="left:1565px;top:1380px;width:2px;height:2px;background:#8a8a8a"></div>
<div class="a" style="left:1569px;top:1380px;width:2px;height:2px;background:#8a8a8a"></div>
<div class="a" style="left:1561px;top:1384px;width:2px;height:2px;background:#8a8a8a"></div>
<div class="a" style="left:1565px;top:1384px;width:2px;height:2px;background:#8a8a8a"></div>
<div class="a" style="left:1569px;top:1384px;width:2px;height:2px;background:#8a8a8a"></div>
</body></html>
